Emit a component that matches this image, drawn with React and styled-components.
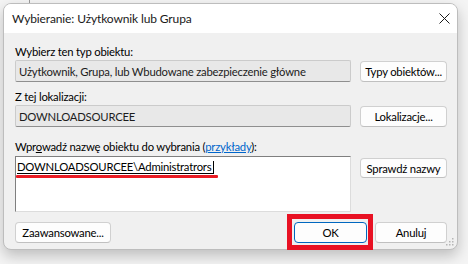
import React from "react";
import styled, { createGlobalStyle } from "styled-components";

const Global = createGlobalStyle`
  html, body { margin: 0; padding: 0; }
  body {
    background: #f4f4f4;
    font-family: Lato, "Liberation Sans", sans-serif;
    font-size: 11.3px;
    letter-spacing: -0.22px;
    color: #000;
    width: 468px;
    height: 264px;
    overflow: hidden;
  }
`;

const Desktop = styled.div`
  width: 468px;
  height: 264px;
  padding: 3px 10px 0 3px;
  box-sizing: border-box;
  position: relative;
`;

const BgLine = styled.div`
  position: absolute;
  left: 29px;
  top: 0;
  width: 1px;
  height: 4px;
  background: #9a9a9a;
`;

const Window = styled.div`
  position: relative;
  width: 455px;
  height: 247px;
  box-sizing: border-box;
  border: 1px solid #bdbdbd;
  border-radius: 8px;
  background: #f0f0f0;
  box-shadow: 0 6px 14px rgba(0, 0, 0, 0.22);
  display: flex;
  flex-direction: column;
`;

const TitleBar = styled.div`
  height: 29px;
  background: #ffffff;
  border-radius: 7px 7px 0 0;
  display: flex;
  align-items: center;
  justify-content: space-between;
  padding: 0 7px 0 8px;
  flex-shrink: 0;
`;

const Title = styled.span`
  font-size: 12px;
  letter-spacing: -0.12px;
  color: #1a1a1a;
`;

const CloseBtn = styled.div`
  width: 12px;
  height: 12px;
  display: flex;
  align-items: center;
  justify-content: center;
`;

const Body = styled.div`
  flex: 1;
  padding: 11px 10px 5px 11px;
  display: flex;
  flex-direction: column;
`;

const Grid = styled.div`
  display: grid;
  grid-template-columns: 336px 87px;
  column-gap: 9px;
`;

const Label = styled.div`
  grid-column: 1;
  height: 15px;
  line-height: 15px;
  margin-top: ${(p) => p.$top || 0}px;
  margin-bottom: ${(p) => p.$bottom || 1}px;
  color: #000;
  white-space: nowrap;
`;

const U = styled.span`
  text-decoration: underline;
`;

const Link = styled.span`
  color: #0066cc;
  text-decoration: underline;
`;

const Field = styled.div`
  grid-column: 1;
  height: 22px;
  box-sizing: border-box;
  background: #e8e8e8;
  border: 1px solid #cbcbcb;
  border-bottom-color: #8f8f8f;
  border-radius: 2px;
  display: flex;
  align-items: center;
  padding-left: 3px;
  color: #1c1c1c;
  white-space: nowrap;
`;

const Button = styled.button`
  font-family: inherit;
  font-size: 11.3px;
  letter-spacing: -0.22px;
  color: #000;
  height: ${(p) => p.$h || 21}px;
  width: ${(p) => p.$w || 87}px;
  box-sizing: border-box;
  background: #fdfdfd;
  border: 1px solid ${(p) => (p.$primary ? "#0067c0" : "#d0d0d0")};
  border-bottom-color: ${(p) => (p.$primary ? "#0067c0" : "#c0c0c0")};
  border-radius: 4px;
  padding: 0;
  display: flex;
  align-items: center;
  justify-content: center;
  align-self: ${(p) => p.$align || "center"};
  margin-top: ${(p) => p.$mt || 0}px;
  white-space: nowrap;
`;

const TextArea = styled.div`
  grid-column: 1;
  height: 56px;
  box-sizing: border-box;
  background: #ffffff;
  border: 1px solid #dcdcdc;
  border-top-color: #7f7f7f;
  border-left-color: #7f7f7f;
  padding: 3px 0 0 1px;
  position: relative;
`;

const Entry = styled.span`
  display: inline-block;
  height: 12px;
  line-height: 12px;
  padding-right: 2px;
  border-bottom: 1px solid #000;
  border-right: 1px solid #000;
  color: #000;
  white-space: nowrap;
`;

const RedLine = styled.div`
  position: absolute;
  left: 0;
  top: 18px;
  width: 202px;
  height: 3px;
  background: #ea1c24;
  border-radius: 1px;
`;

const Footer = styled.div`
  margin-top: 10px;
  display: flex;
  align-items: center;
`;

const Spacer = styled.div`
  flex: 1;
`;

const Highlight = styled.div`
  position: relative;
  margin-right: 8px;
  &::before {
    content: "";
    position: absolute;
    left: -7px;
    right: -6px;
    top: -8px;
    bottom: -7px;
    border: 5px solid #e81123;
    pointer-events: none;
  }
`;

const Grip = styled.svg`
  position: absolute;
  right: 3px;
  bottom: 3px;
`;

export default function App() {
  return (
    <>
      <Global />
      <Desktop>
        <BgLine />
        <Window>
          <TitleBar>
            <Title>Wybieranie: Użytkownik lub Grupa</Title>
            <CloseBtn>
              <svg width="11" height="11" viewBox="0 0 11 11">
                <path d="M0.5 0.5 L10.5 10.5 M10.5 0.5 L0.5 10.5" stroke="#1a1a1a" strokeWidth="1" fill="none" />
              </svg>
            </CloseBtn>
          </TitleBar>
          <Body>
            <Grid>
              <Label>Wybierz ten typ obiektu:</Label>
              <div />
              <Field>Użytkownik, Grupa, lub Wbudowane zabezpieczenie główne</Field>
              <Button $h={21}>Typy obiektów...</Button>
              <Label $top={7}>Z tej lokalizacji:</Label>
              <div />
              <Field>DOWNLOADSOURCEE</Field>
              <Button $h={21}>Lokalizacje...</Button>
              <Label $top={12} $bottom={2}>
                Wpr<U>o</U>wadź nazwę obiektu do wybrania (<Link>przykłady</Link>):
              </Label>
              <div />
              <TextArea>
                <Entry>DOWNLOADSOURCEE\Administratrors</Entry>
                <RedLine />
              </TextArea>
              <Button $h={20} $align="start" $mt={2}>Sprawdź nazwy</Button>
            </Grid>
            <Footer>
              <Button $w={96}>Zaawansowane...</Button>
              <Spacer />
              <Highlight>
                <Button $w={73} $primary>OK</Button>
              </Highlight>
              <Button $w={72}>Anuluj</Button>
            </Footer>
          </Body>
          <Grip width="8" height="8" viewBox="0 0 8 8">
            <rect x="6" y="0" width="1.5" height="1.5" fill="#b5b5b5" />
            <rect x="3" y="3" width="1.5" height="1.5" fill="#b5b5b5" />
            <rect x="6" y="3" width="1.5" height="1.5" fill="#b5b5b5" />
            <rect x="0" y="6" width="1.5" height="1.5" fill="#b5b5b5" />
            <rect x="3" y="6" width="1.5" height="1.5" fill="#b5b5b5" />
            <rect x="6" y="6" width="1.5" height="1.5" fill="#b5b5b5" />
          </Grip>
        </Window>
      </Desktop>
    </>
  );
}
